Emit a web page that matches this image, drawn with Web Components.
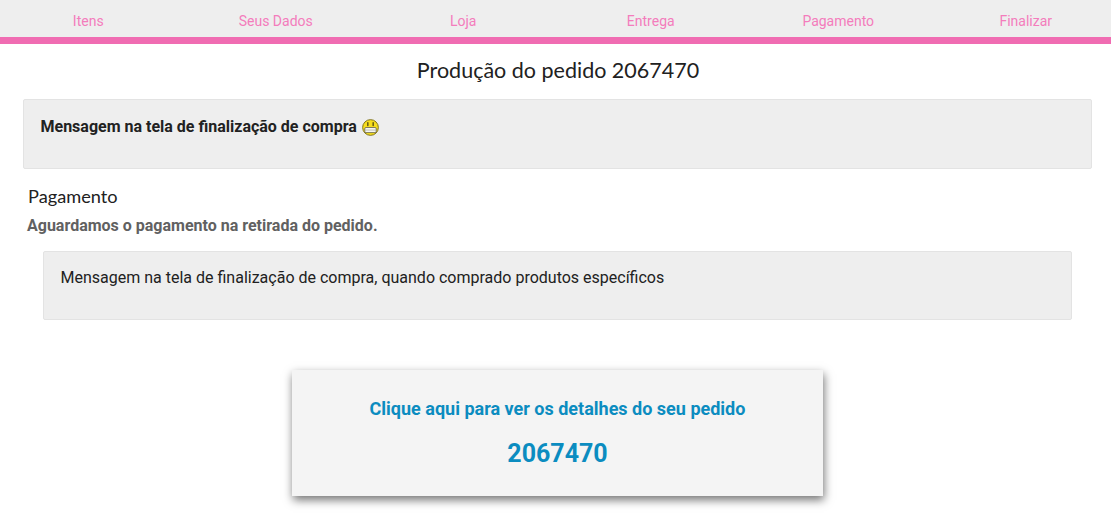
<!DOCTYPE html>
<html lang="pt-BR">
<head>
<meta charset="utf-8">
<title>Produção do pedido</title>
<style>
  html, body { margin: 0; background: #fff; }
  body { min-height: 525px; overflow: hidden; font-family: Roboto, "Liberation Sans", sans-serif; color: #212121; }
</style>
</head>
<body>
<order-steps></order-steps>
<page-title>Produção do pedido 2067470</page-title>
<note-box style="margin:0 19px 0 23px"><b>Mensagem na tela de finalização de compra <grimace-icon></grimace-icon></b></note-box>
<payment-info>
  <span slot="title">Pagamento</span>
  <span slot="status">Aguardamos o pagamento na retirada do pedido.</span>
  <note-box style="height:69px;padding-top:16px">Mensagem na tela de finalização de compra, quando comprado produtos específicos</note-box>
</payment-info>
<order-card number="2067470">Clique aqui para ver os detalhes do seu pedido</order-card>

<script>
(function () {
  "use strict";

  var steps = ["Itens", "Seus Dados", "Loja", "Entrega", "Pagamento", "Finalizar"];

  class OrderSteps extends HTMLElement {
    connectedCallback() {
      var root = this.attachShadow({ mode: "open" });
      var html = steps.map(function (s) { return "<a>" + s + "</a>"; }).join("");
      root.innerHTML =
        "<style>" +
        ":host{display:block;background:#eee;border-bottom:7px solid #f06cb2;height:37px;overflow:hidden}" +
        "nav{display:grid;grid-template-columns:repeat(6,187.5px);margin-left:-5.5px;height:37px;align-items:center}" +
        "a{text-align:center;font-size:14px;color:#f47cbc;line-height:42px;height:37px}" +
        "</style><nav>" + html + "</nav>";
    }
  }

  class PageTitle extends HTMLElement {
    connectedCallback() {
      this.attachShadow({ mode: "open" }).innerHTML =
        "<style>:host{display:block;text-align:center;padding-top:12px;box-sizing:border-box;" +
        "font:21.5px/29px Lato,sans-serif;color:#212121;height:55px;margin-left:5px}</style><slot></slot>";
    }
  }

  class NoteBox extends HTMLElement {
    connectedCallback() {
      this.attachShadow({ mode: "open" }).innerHTML =
        "<style>:host{display:block;box-sizing:border-box;height:70px;background:#eee;border:1px solid #e3e3e3;" +
        "border-radius:2px;padding:17px 16.5px;font-size:16px;line-height:20px;color:#212121}</style><slot></slot>";
    }
  }

  class GrimaceIcon extends HTMLElement {
    connectedCallback() {
      this.attachShadow({ mode: "open" }).innerHTML =
        "<style>:host{display:inline-block;width:17px;height:17px;vertical-align:-4px;margin-left:1px}svg{display:block}</style>" +
        '<svg width="17" height="17" viewBox="0 0 16 16">' +
        '<circle cx="8" cy="8" r="7.4" fill="#f6dd1e" stroke="#7d7016" stroke-width=".9"/>' +
        '<path d="M5.5 3.4v2.8M10.5 3.4v2.8" stroke="#4a4212" stroke-width="1.2" stroke-linecap="round"/>' +
        '<rect x="2.6" y="8" width="10.8" height="4.8" rx="1.2" fill="#f6f6f2" stroke="#55554a" stroke-width=".7"/>' +
        '<path d="M2.6 10.4h10.8" stroke="#a0a094" stroke-width=".6"/>' +
        "</svg>";
    }
  }

  class PaymentInfo extends HTMLElement {
    connectedCallback() {
      this.attachShadow({ mode: "open" }).innerHTML =
        "<style>:host{display:block;padding:15px 39px 0 27px}" +
        ".title{font:18.2px/24px Lato,sans-serif;color:#212121;margin-left:1px}" +
        ".status{font-size:16px;font-weight:700;line-height:20px;color:#616161;margin-top:8px}" +
        ".note{margin:15px 0 0 16px}</style>" +
        '<div class="title"><slot name="title"></slot></div>' +
        '<div class="status"><slot name="status"></slot></div>' +
        '<div class="note"><slot></slot></div>';
    }
  }

  class OrderCard extends HTMLElement {
    connectedCallback() {
      var num = this.getAttribute("number") || "";
      this.attachShadow({ mode: "open" }).innerHTML =
        "<style>:host{display:block;box-sizing:border-box;width:531px;height:126px;margin:50px 0 0 292px;background:#f4f4f4;" +
        "box-shadow:1px 4px 9px 0 rgba(0,0,0,.55);text-align:center;color:#0b8cc0;font-weight:700;padding-top:28px}" +
        ".msg{font-size:18px;line-height:22px}.num{font-size:25px;line-height:32px;margin-top:18px}</style>" +
        '<div class="msg"><slot></slot></div><div class="num">' + num + "</div>";
    }
  }

  customElements.define("order-steps", OrderSteps);
  customElements.define("page-title", PageTitle);
  customElements.define("note-box", NoteBox);
  customElements.define("grimace-icon", GrimaceIcon);
  customElements.define("payment-info", PaymentInfo);
  customElements.define("order-card", OrderCard);
})();
</script>
</body>
</html>
